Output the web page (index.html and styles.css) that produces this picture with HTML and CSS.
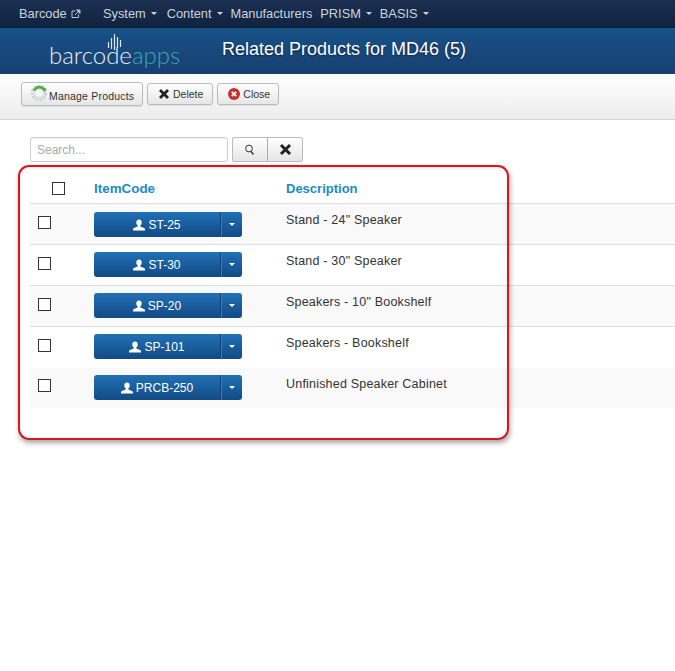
FILE: index.html
```html
<!DOCTYPE html>
<html lang="en">
<head>
<meta charset="utf-8">
<title>Related Products for MD46 (5)</title>
<link rel="stylesheet" href="styles.css">
</head>
<body>
<nav class="topnav">
  <a class="nav-brand">Barcode <svg class="ext" viewBox="0 0 10 10" width="10" height="10"><path d="M7.5 5.500v3h-6.500v-6.500h3.500" fill="none" stroke="#b9c3d0" stroke-width="1"/><path d="M4 6l4-4M5.600 1h3.400v3.400z" fill="#b9c3d0" stroke="#b9c3d0" stroke-width="1"/></svg></a>
  <ul class="nav-list">
    <li class="nav-first">System <span class="caret"></span></li>
    <li>Content <span class="caret"></span></li>
    <li>Manufacturers</li>
    <li>PRISM <span class="caret"></span></li>
    <li>BASIS <span class="caret"></span></li>
  </ul>
</nav>
<header class="titlebar">
  <div class="logo">
    <svg class="logo-bars" viewBox="0 0 16 16" width="16" height="16"><path d="M1.500 8v6M4.500 4v11M7.500 0v16M10.500 3v11M13.500 6v7" stroke="#dfe8ee" stroke-width="1.200" fill="none"/></svg>
    <span class="logo-a">barcode</span><span class="logo-b">apps</span>
  </div>
  <h1 class="title">Related Products for MD46 (5)</h1>
</header>
<div class="toolbar">
  <button class="btn btn-manage">
    <svg class="gear" viewBox="0 0 18 18" width="18" height="18"><circle cx="9" cy="10" r="6.500" fill="none" stroke="#cfd3cf" stroke-width="3.500" stroke-dasharray="2.400 1.200"/><circle cx="9" cy="10" r="5" fill="none" stroke="#dcdfdc" stroke-width="2"/><path d="M4.200 7.500a5.500 5.500 0 0 1 9.800-.8" fill="none" stroke="#4fb04a" stroke-width="2.800"/><path d="M12 4.500l4.500 1-2 4z" fill="#4fb04a"/><circle cx="9" cy="10" r="3" fill="#f6f6f6"/></svg>
    <span class="btn-label">Manage Products</span>
  </button>
  <button class="btn btn-small btn-delete">
    <svg viewBox="0 0 12 12" width="12" height="12"><path d="M2 2l8 8M10 2l-8 8" stroke="#222" stroke-width="2.800"/></svg>
    Delete
  </button>
  <button class="btn btn-small">
    <svg viewBox="0 0 12 12" width="12" height="12"><circle cx="6" cy="6" r="6" fill="#c9302c"/><path d="M3.800 3.800l4.400 4.400M8.200 3.800l-4.400 4.400" stroke="#fff" stroke-width="1.800"/></svg>
    Close
  </button>
</div>
<main class="content">
  <div class="searchbar">
    <input class="search" type="text" placeholder="Search...">
    <div class="search-group">
      <button class="sbtn"><svg viewBox="0 0 12 12" width="12" height="12"><circle cx="5" cy="4.500" r="3.400" fill="none" stroke="#333" stroke-width="1"/><path d="M7 7.500l2.500 3" stroke="#333" stroke-width="1.300"/></svg></button>
      <button class="sbtn"><svg viewBox="0 0 13 13" width="13" height="13"><path d="M2 2l9 9M11 2l-9 9" stroke="#222" stroke-width="3"/></svg></button>
    </div>
  </div>
  <div class="table">
    <div class="row head">
      <div class="c-check"><span class="cb"></span></div>
      <div class="c-code">ItemCode</div>
      <div class="c-desc">Description</div>
    </div>
    <div class="row odd first">
      <div class="c-check"><span class="cb"></span></div>
      <div class="c-code"><div class="split"><span class="main"><svg class="user" viewBox="0 0 12 12" width="12" height="12"><path d="M6 0.500c1.700 0 2.700 1.300 2.700 3 0 1.300-.6 2.500-1.400 3v1l3.700 1.600c.6.3 1 .8 1 1.400v1H0v-1c0-.6.4-1.100 1-1.400l3.700-1.600v-1C3.900 6 3.300 4.800 3.300 3.500c0-1.700 1-3 2.700-3z"/></svg>ST-25</span><span class="drop"><span class="caret"></span></span></div></div>
      <div class="c-desc">Stand - 24" Speaker</div>
    </div>
    <div class="row">
      <div class="c-check"><span class="cb"></span></div>
      <div class="c-code"><div class="split"><span class="main"><svg class="user" viewBox="0 0 12 12" width="12" height="12"><path d="M6 0.500c1.700 0 2.700 1.300 2.700 3 0 1.300-.6 2.500-1.400 3v1l3.700 1.600c.6.3 1 .8 1 1.400v1H0v-1c0-.6.4-1.100 1-1.400l3.700-1.600v-1C3.900 6 3.300 4.800 3.300 3.500c0-1.700 1-3 2.700-3z"/></svg>ST-30</span><span class="drop"><span class="caret"></span></span></div></div>
      <div class="c-desc">Stand - 30" Speaker</div>
    </div>
    <div class="row odd">
      <div class="c-check"><span class="cb"></span></div>
      <div class="c-code"><div class="split"><span class="main"><svg class="user" viewBox="0 0 12 12" width="12" height="12"><path d="M6 0.500c1.700 0 2.700 1.300 2.700 3 0 1.300-.6 2.500-1.400 3v1l3.700 1.600c.6.3 1 .8 1 1.400v1H0v-1c0-.6.4-1.100 1-1.400l3.700-1.600v-1C3.900 6 3.300 4.800 3.300 3.500c0-1.700 1-3 2.700-3z"/></svg>SP-20</span><span class="drop"><span class="caret"></span></span></div></div>
      <div class="c-desc">Speakers - 10" Bookshelf</div>
    </div>
    <div class="row no-line">
      <div class="c-check"><span class="cb"></span></div>
      <div class="c-code"><div class="split"><span class="main"><svg class="user" viewBox="0 0 12 12" width="12" height="12"><path d="M6 0.500c1.700 0 2.700 1.300 2.700 3 0 1.300-.6 2.500-1.400 3v1l3.700 1.600c.6.3 1 .8 1 1.400v1H0v-1c0-.6.4-1.100 1-1.400l3.700-1.600v-1C3.900 6 3.300 4.800 3.300 3.500c0-1.700 1-3 2.700-3z"/></svg>SP-101</span><span class="drop"><span class="caret"></span></span></div></div>
      <div class="c-desc">Speakers - Bookshelf</div>
    </div>
    <div class="row odd last">
      <div class="c-check"><span class="cb"></span></div>
      <div class="c-code"><div class="split"><span class="main"><svg class="user" viewBox="0 0 12 12" width="12" height="12"><path d="M6 0.500c1.700 0 2.700 1.300 2.700 3 0 1.300-.6 2.500-1.400 3v1l3.700 1.600c.6.3 1 .8 1 1.400v1H0v-1c0-.6.4-1.100 1-1.400l3.700-1.600v-1C3.900 6 3.300 4.800 3.300 3.500c0-1.700 1-3 2.700-3z"/></svg>PRCB-250</span><span class="drop"><span class="caret"></span></span></div></div>
      <div class="c-desc">Unfinished Speaker Cabinet</div>
    </div>
  </div>
  <div class="callout"></div>
</main>
</body>
</html>
```
FILE: styles.css
```css
* { box-sizing: border-box; }
html, body { margin: 0; padding: 0; }
body {
  width: 675px;
  height: 671px;
  overflow: hidden;
  background: #fff;
  font-family: "Liberation Sans", Arial, sans-serif;
  font-size: 12px;
  color: #333;
  position: relative;
}
.topnav {
  height: 28px;
  background: linear-gradient(#1b3052, #10233f);
  border-bottom: 1px solid #0a1a30;
  display: flex;
  align-items: center;
  padding: 0 0 1px 19px;
  color: #ccd3dc;
  font-size: 12.8px;
}
.nav-brand { display: flex; align-items: center; gap: 4px; width: 84px; }
.ext { margin-top: 2px; }
.nav-list { display: flex; list-style: none; margin: 0; padding: 0; gap: 8px; }
.nav-list li { display: flex; align-items: center; gap: 4px; white-space: nowrap; }
.nav-list .nav-first { margin-right: 2px; }
.caret {
  display: inline-block;
  width: 0;
  height: 0;
  border-left: 3px solid transparent;
  border-right: 3px solid transparent;
  border-top: 3px solid currentColor;
  margin: 1px 0 0 1px;
}
.titlebar {
  height: 46px;
  background: linear-gradient(#175289, #183f70);
  display: flex;
  align-items: center;
  position: relative;
}
.logo {
  width: 222px;
  padding: 7px 0 0 49px;
  position: relative;
  font-family: Lato, sans-serif;
  font-weight: 300;
  font-size: 24px;
  line-height: 36px;
  white-space: nowrap;
}
.logo-a { color: #e8eff3; }
.logo-b { color: #3aa6b4; }
.logo-bars { position: absolute; left: 107px; top: 4px; }
.title {
  margin: 0 0 3px;
  font-size: 18px;
  font-weight: 400;
  color: #fff;
  text-shadow: 0 1px 2px #0a2340;
  white-space: nowrap;
}
.toolbar {
  height: 46px;
  background: linear-gradient(#fff, #ececec);
  border-bottom: 1px solid #d4d4d4;
  display: flex;
  align-items: flex-start;
  gap: 4px;
  padding: 8px 0 0 21px;
}
.btn {
  font-family: "Liberation Sans", Arial, sans-serif;
  font-size: 10.500px;
  color: #333;
  background: linear-gradient(#fff, #e6e6e6);
  border: 1px solid #bbb;
  border-radius: 3px;
  display: flex;
  align-items: center;
  padding: 0;
  box-shadow: 0 1px 1px rgba(0,0,0,.08);
}
.btn-manage { width: 122px; height: 24px; padding-left: 9px; gap: 1px; letter-spacing: 0.2px; }
.btn-label { padding-top: 3px; }
.btn-small { height: 22px; padding: 0 8px 0 10px; gap: 3px; margin-top: 1px; }
.btn-delete { padding-right: 9px; }
.gear { margin-top: -5px; flex: none; margin-left: -1px; }
.content { position: relative; padding: 17px 0 0 30px; }
.searchbar { display: flex; gap: 4px; height: 26px; }
.search {
  width: 198px;
  height: 25px;
  border: 1px solid #ccc;
  border-radius: 3px;
  padding: 0 6px;
  font-family: "Liberation Sans", Arial, sans-serif;
  font-size: 12px;
  box-shadow: inset 0 1px 1px rgba(0,0,0,.06);
}
.search::placeholder { color: #aaa; opacity: 1; }
.search-group { display: flex; }
.sbtn {
  width: 36px;
  height: 25px;
  padding: 0;
  background: linear-gradient(#fff, #e6e6e6);
  border: 1px solid #bbb;
  display: flex;
  align-items: center;
  justify-content: center;
}
.sbtn:first-child { border-radius: 3px 0 0 3px; border-right-color: #aaa; }
.sbtn:last-child { border-radius: 0 3px 3px 0; border-left: 0; width: 35px; }
.table { margin-top: 3px; }
.row {
  display: flex;
  height: 41px;
  border-bottom: 1px solid #ddd;
  font-size: 12px;
}
.row.head { height: 38px; font-weight: 700; color: #1a8bc8; align-items: flex-start; padding-top: 15px; }
.row.odd { background: #f9f9f9; }
.row.no-line { border-bottom-color: transparent; }
.row.last { border-bottom: 0; height: 40px; }
.c-check { width: 64px; padding: 12px 0 0 8px; flex: none; }
.last .c-check { padding-top: 11px; }
.head .c-check { padding: 1px 0 0 22px; }
.c-code { width: 192px; flex: none; padding-top: 7px; }
.first .c-code { padding-top: 8px; }
.head .c-code { padding-top: 0; font-size: 13.400px; }
.c-desc { padding-top: 9px; font-size: 12.500px; letter-spacing: 0.2px; }
.head .c-desc { padding-top: 0; font-size: 13px; letter-spacing: 0; }
.cb {
  display: block;
  width: 13px;
  height: 13px;
  border: 1px solid #333;
  background: #fff;
}
.split {
  display: flex;
  width: 148px;
  height: 25px;
  border-radius: 3px;
  color: #fff;
  background: linear-gradient(#2171b5, #124a85);
  font-size: 12px;
  font-weight: 400;
}
.main {
  width: 127px;
  display: flex;
  align-items: center;
  justify-content: center;
  gap: 3px;
  border-right: 1px solid #0f4276;
  padding-top: 1px;
}
.drop {
  flex: 1;
  display: flex;
  align-items: center;
  justify-content: center;
  box-shadow: inset 1px 0 0 #3a7cb8;
}
.drop .caret { margin: 0; }
.user { fill: #fff; flex: none; }
.callout {
  position: absolute;
  left: 18px;
  top: 45px;
  width: 491px;
  height: 275px;
  border: 2px solid #d9161f;
  border-radius: 11px;
  box-shadow: 1px 3px 5px rgba(0,0,0,.35), inset 0 1px 3px rgba(0,0,0,.12);
  pointer-events: none;
}
```
